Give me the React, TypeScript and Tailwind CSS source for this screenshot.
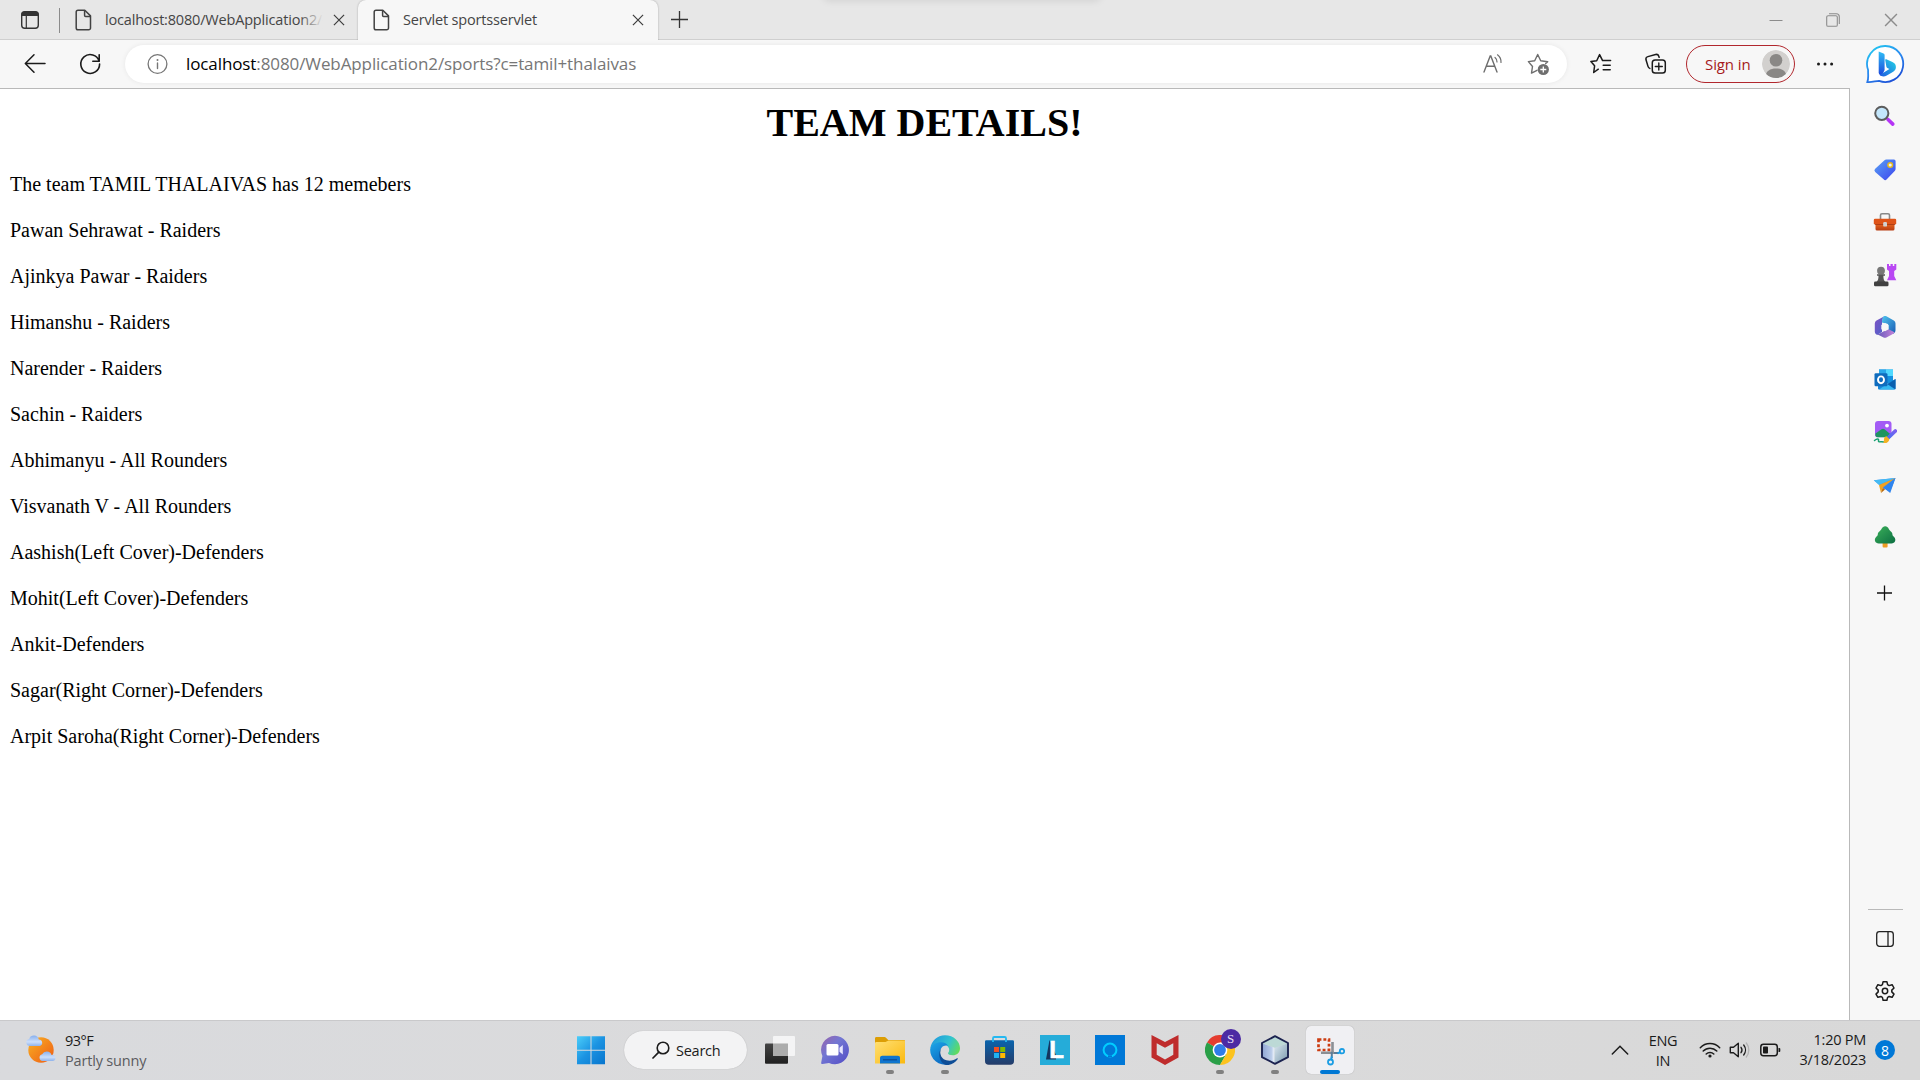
import React from "react";

const ui = "font-['Open_Sans','Noto_Sans',sans-serif]";

type IconProps = { size?: number; className?: string; children: React.ReactNode };

function Icon({ size = 24, className = "", children }: IconProps) {
  return (
    <svg width={size} height={size} viewBox={`0 0 ${size} ${size}`} fill="none" className={`block shrink-0 ${className}`}>
      {children}
    </svg>
  );
}

function DocIcon() {
  return (
    <svg width="17" height="22" viewBox="0 0 17 22" fill="none" stroke="#424242" strokeWidth="1.5" strokeLinejoin="round" className="block shrink-0">
      <path d="M3 1.2h6.8l5.7 5.7v12a1.8 1.8 0 0 1-1.8 1.8H3a1.8 1.8 0 0 1-1.8-1.8V3A1.8 1.8 0 0 1 3 1.2Z" />
      <path d="M9.6 1.4v5a1 1 0 0 0 1 1h4.8" />
    </svg>
  );
}

function CloseIcon({ size = 12, color = "#3c3c3c" }: { size?: number; color?: string }) {
  return (
    <svg width={size} height={size} viewBox="0 0 13 13" stroke={color} strokeWidth="1.3" className="block shrink-0">
      <path d="M1 1l11 11M12 1L1 12" />
    </svg>
  );
}

function TabStrip() {
  return (
    <div className="relative flex h-[40px] shrink-0 items-start overflow-hidden bg-[#e7e7e7] shadow-[inset_0_-1px_0_#cfcfcf]">
      <div className="absolute top-[-9px] left-[824px] h-[9px] w-[276px] rounded-full shadow-[0_0_8px_rgba(0,0,0,0.12)]" />
      <div className="flex h-[40px] w-[59px] items-center pl-[20px]">
        <Icon size={20}>
          <rect x="1.7" y="1.7" width="16.6" height="16.6" rx="3" stroke="#333" strokeWidth="1.4" />
          <path d="M1.5 6V4.5a3 3 0 0 1 3-3h11a3 3 0 0 1 3 3V6Z" fill="#333" />
          <path d="M6.3 6v12" stroke="#333" strokeWidth="1.2" />
        </Icon>
      </div>
      <div className="mt-[8px] h-[25px] w-px bg-[#8b8b8b]" />
      <div className="flex h-[40px] w-[298px] items-center pl-[15px]">
        <DocIcon />
        <div className={`${ui} relative ml-[13px] w-[218px] overflow-hidden text-[14.5px] tracking-[-0.18px] whitespace-nowrap text-[#454545]`}>
          localhost:8080/WebApplication2/
          <div className="absolute inset-y-0 right-0 w-[24px] bg-linear-to-r from-transparent to-[#e7e7e7]" />
        </div>
        <div className="ml-[10px]"><CloseIcon /></div>
      </div>
      <div className="flex h-[40px] w-[300px] items-center rounded-t-[8px] bg-[#f7f7f7] pl-[15px] shadow-[0_0_2px_rgba(0,0,0,0.3)] [clip-path:inset(-4px_-4px_0_-4px)]">
        <DocIcon />
        <div className={`${ui} ml-[13px] w-[229px] text-[14.5px] tracking-[-0.18px] whitespace-nowrap text-[#454545]`}>Servlet sportsservlet</div>
        <CloseIcon />
      </div>
      <div className="mt-[10px] ml-[12px]">
        <Icon size={18}><path d="M9.500 1v17M1 9.500h17" stroke="#333" strokeWidth="1.3" /></Icon>
      </div>
      <div className="ml-auto flex h-[39px] items-center pr-[22px]">
        <Icon size={14}><path d="M0.5 7.5h13" stroke="#8c8c8c" /></Icon>
        <div className="ml-[43px]">
          <Icon size={14}>
            <rect x="0.7" y="2.7" width="10.6" height="10.6" rx="1.4" stroke="#8c8c8c" strokeWidth="1.1" />
            <path d="M3 .7h7.3a3 3 0 0 1 3 3V11" stroke="#8c8c8c" strokeWidth="1.1" />
          </Icon>
        </div>
        <div className="ml-[44px]"><CloseIcon size={14} color="#8c8c8c" /></div>
      </div>
    </div>
  );
}

function Toolbar() {
  return (
    <div className="flex h-[48px] shrink-0 items-center bg-[#f7f7f7] pl-[24px]">
      <Icon size={22}><path d="M21 10.5H1.8M10 1.8L1.3 10.5l8.7 8.7" stroke="#1b1b1b" strokeWidth="1.5" strokeLinecap="round" strokeLinejoin="round" /></Icon>
      <Icon size={24} className="ml-[32px]">
        <path d="M21.2 9.3A9.4 9.4 0 1 0 21.6 12M21.2 2.8v6.5h-6.4" stroke="#1b1b1b" strokeWidth="1.6" strokeLinecap="round" strokeLinejoin="round" />
      </Icon>
      <div className="ml-[23px] flex h-[38px] w-[1442px] items-center rounded-full bg-white pl-[22px] shadow-[0_0_5px_rgba(0,0,0,0.07)]">
        <Icon size={22}>
          <circle cx="10.5" cy="11" r="9.4" stroke="#767676" strokeWidth="1.3" />
          <path d="M10.5 10v5.5" stroke="#767676" strokeWidth="1.4" strokeLinecap="round" />
          <circle cx="10.5" cy="7" r="1" fill="#767676" />
        </Icon>
        <div className={`${ui} ml-[17px] text-[17px] tracking-[-0.1px] whitespace-nowrap text-[#767676]`}>
          <span className="text-black">localhost</span>:8080/WebApplication2/sports?c=tamil+thalaivas
        </div>
        <Icon size={22} className="ml-auto">
          <path d="M2 19L8.2 3h.6L15 19M4.3 13.3h8.4" stroke="#6e6e6e" strokeWidth="1.4" strokeLinecap="round" />
          <path d="M13 4.5a5.5 5.5 0 0 1 2 4.5M15.500 1.800A9 9 0 0 1 19 9.500" stroke="#6e6e6e" strokeWidth="1.2" strokeLinecap="round" />
        </Icon>
        <Icon size={24} className="mr-[16px] ml-[23px]">
          <path d="M10 18.3l-5.5 2.8 1-6.6L1.4 9.6l6.3-.9 3-6.200 3 6.200 7 1-2 1.800" stroke="#6e6e6e" strokeWidth="1.4" strokeLinejoin="round" strokeLinecap="round" />
          <circle cx="16.3" cy="17.500" r="5.600" fill="#6e6e6e" />
          <path d="M16.300 14.500v6M13.300 17.500h6" stroke="white" strokeWidth="1.300" />
        </Icon>
      </div>
      <Icon size={22} className="ml-[23px]">
        <path d="M8.300 16.200l-4.600 3.300.9-6.700L.9 8.600l5.800-.9L9.600 1.600l3 6h8M6.900 17.200" stroke="#1b1b1b" strokeWidth="1.500" strokeLinejoin="round" strokeLinecap="round" />
        <path d="M13.200 12.200h7M13.200 16.800h7" stroke="#1b1b1b" strokeWidth="1.500" strokeLinecap="round" />
      </Icon>
      <Icon size={22} className="ml-[33px]">
        <rect x="7.300" y="7" width="13" height="13" rx="2.800" stroke="#1b1b1b" strokeWidth="1.500" />
        <path d="M13.800 10v7M10.300 13.500h7" stroke="#1b1b1b" strokeWidth="1.400" strokeLinecap="round" />
        <path d="M4.800 15.400a3 3 0 0 1-1.800-2L1 6.800a2.700 2.700 0 0 1 1.900-3.200l7.700-2.100a2.700 2.700 0 0 1 3.200 1.800l.3 1" stroke="#1b1b1b" strokeWidth="1.500" strokeLinecap="round" />
      </Icon>
      <div className={`${ui} ml-[19px] flex h-[38px] w-[109px] items-center rounded-full border border-[#b1272d] pl-[18px] text-[15px] text-[#a51a20]`}>
        <span className="w-[57px] tracking-[-0.100px] whitespace-nowrap">Sign in</span>
        <Icon size={28}>
          <clipPath id="avatar"><circle cx="14" cy="14" r="14" /></clipPath>
          <g clipPath="url(#avatar)">
            <circle cx="14" cy="14" r="14" fill="#d2d0ce" />
            <circle cx="14" cy="10.300" r="6.300" fill="#8a8886" />
            <path d="M3.800 26c0-5 4.500-7.500 10.200-7.500S24.200 21 24.200 26v3H3.800Z" fill="#8a8886" />
          </g>
        </Icon>
      </div>
      <Icon size={18} className="ml-[21px]">
        <circle cx="2.500" cy="9" r="1.500" fill="#1b1b1b" /><circle cx="9" cy="9" r="1.500" fill="#1b1b1b" /><circle cx="15.600" cy="9" r="1.500" fill="#1b1b1b" />
      </Icon>
      <Icon size={40} className="ml-[31px]">
        <defs>
          <linearGradient id="bingRing" x1="8" y1="2" x2="30" y2="38" gradientUnits="userSpaceOnUse"><stop stopColor="#22c7f0" /><stop offset=".5" stopColor="#2b8af0" /><stop offset="1" stopColor="#1b4bd4" /></linearGradient>
          <linearGradient id="bingStem" x1="0" y1="0" x2="0" y2="1"><stop stopColor="#30bdf5" /><stop offset="1" stopColor="#1b48dc" /></linearGradient>
          <linearGradient id="bingBowl" x1="1" y1="0" x2="0" y2="1"><stop stopColor="#25d5e6" /><stop offset="1" stopColor="#1e5ae0" /></linearGradient>
        </defs>
        <path d="M20.500 2A18 18 0 1 1 14 36.900C10.500 37 6.500 38.500 2.300 38c1.600-3.800.6-7.500.8-12A18 18 0 0 1 20.500 2Z" fill="white" stroke="url(#bingRing)" strokeWidth="1.800" />
        <path d="M13.700 7.600l4.800 1.900c.7.300 1.100.7 1.100 1.400V26l-2.600 5.200c-2 .3-3.300-.9-3.300-2.700Z" fill="url(#bingStem)" />
        <path d="M20.800 15l6.600 3c2.500 1.200 3.500 2.700 3.500 5 0 2.100-.9 3.600-2.700 4.700l-6.400 3.900c-2.500 1.400-5.300 1.300-7.100-.5l9.700-6-2-1.200c-.5-.3-.8-.6-1-1.200L20.200 16Z" fill="url(#bingBowl)" />
      </Icon>
    </div>
  );
}

const lines = [
  "The team TAMIL THALAIVAS has 12 memebers",
  "Pawan Sehrawat - Raiders",
  "Ajinkya Pawar - Raiders",
  "Himanshu - Raiders",
  "Narender - Raiders",
  "Sachin - Raiders",
  "Abhimanyu - All Rounders",
  "Visvanath V - All Rounders",
  "Aashish(Left Cover)-Defenders",
  "Mohit(Left Cover)-Defenders",
  "Ankit-Defenders",
  "Sagar(Right Corner)-Defenders",
  "Arpit Saroha(Right Corner)-Defenders",
];

function PageContent() {
  return (
    <main className="flex-1 border-t border-[#b9b9b9] bg-white px-[10px] font-['Liberation_Serif',serif] text-black">
      <h1 className="mt-[11px] text-center text-[40px] leading-[46px] font-bold">TEAM DETAILS!</h1>
      <div className="mt-[15px] text-[20px] leading-[46px]">
        {lines.map((line) => <p key={line}>{line}</p>)}
      </div>
    </main>
  );
}

function Sidebar() {
  return (
    <aside className="flex w-[71px] shrink-0 flex-col items-center border-l border-[#b9b9b9] bg-[#f7f7f7] pt-[17px]">
      <div className="flex flex-col gap-[28.500px] pr-px">
        <Icon>
          <path d="M15 14.500l4.800 4.600" stroke="#b535f5" strokeWidth="3.600" strokeLinecap="round" />
          <circle cx="8.800" cy="8.300" r="6.600" fill="#c3e6fb" stroke="#5c5c5c" strokeWidth="2" />
        </Icon>
        <Icon>
          <defs><linearGradient id="tag" x1="0" y1="0" x2="1" y2="1"><stop stopColor="#5aa2f5" /><stop offset="1" stopColor="#3d44ee" /></linearGradient></defs>
          <path d="M13.500 1.600h7.500a1.600 1.600 0 0 1 1.600 1.600v7.500a3 3 0 0 1-.9 2.200l-7.900 8.400a2.200 2.200 0 0 1-3.200 0L2.200 14a2.200 2.200 0 0 1 0-3.200l9-8.300a3 3 0 0 1 2.300-.9Z" fill="url(#tag)" />
          <circle cx="17.200" cy="7" r="2.300" fill="#e9f1ff" stroke="#e8b91c" strokeWidth="1.500" />
        </Icon>
        <Icon>
          <defs><linearGradient id="case" x1="0" y1="0" x2="0" y2="1"><stop stopColor="#ee6a22" /><stop offset="1" stopColor="#b83d12" /></linearGradient></defs>
          <path d="M7.500 9V5.200c0-1 .6-1.500 1.500-1.500h6c.9 0 1.500.5 1.500 1.500V9" stroke="#888" strokeWidth="1.600" />
          <path d="M2.500 13h19v6a1.500 1.500 0 0 1-1.500 1.500H4A1.500 1.500 0 0 1 2.500 19Z" fill="url(#case)" />
          <rect x=".8" y="8.800" width="22.400" height="5.700" rx="1.300" fill="#df5419" />
          <path d="M2 14.500h20" stroke="#9e3411" strokeWidth=".7" />
          <rect x="10.200" y="12" width="3.800" height="4.600" rx="1.200" fill="#d2d2d2" />
        </Icon>
        <Icon>
          <g fill="#b948f3"><path d="M14 1h2v2h1.500V1h2.300v2h1.500V1H23.300v5.500L21.200 8v5l2.100 4.300H14L16 13V8l-2-1.500Z" /></g>
          <circle cx="8" cy="7.700" r="3.900" fill="#777" />
          <path d="M4 11.200h8v1.600h-1.600c0 3 .4 4.800 2 6.200h-9c1.700-1.400 2.100-3.200 2.100-6.200H4Z" fill="#555" />
          <rect x="1" y="18.600" width="14.500" height="4.600" rx="1.300" fill="#414141" />
        </Icon>
        <Icon>
          <defs>
            <linearGradient id="m1" x1="0" y1="0" x2="1" y2="1"><stop stopColor="#8052c3" /><stop offset="1" stopColor="#4b63cb" /></linearGradient>
            <linearGradient id="m2" x1="0" y1="0" x2="1" y2="1"><stop stopColor="#4fc4ee" /><stop offset="1" stopColor="#1a5cb4" /></linearGradient>
            <linearGradient id="m3" x1="0" y1="0" x2="1" y2="0"><stop stopColor="#5c55b8" /><stop offset="1" stopColor="#c583d9" /></linearGradient>
          </defs>
          <path d="M11 1.500L3.500 5.500a3.500 3.500 0 0 0-1.700 3v8c0 2 1.200 3 2.500 3.200L9 17V7.500c0-2.400 1-4.500 2-6Z" fill="url(#m1)" />
          <path d="M10.500 1.400c1-.5 2.200-.5 3.300 0l7 4a3.500 3.500 0 0 1 1.700 3.100V15c0 1.800-.8 3-2 3.700L15 15.500V9L9 7.500c0-3 .6-5 1.500-6.100Z" fill="url(#m2)" />
          <path d="M2.700 18.500c1.500 1 3.200.5 5-.6L15 14l6.500 3.300a4 4 0 0 1-1.200 1.400l-6.400 3.600a4 4 0 0 1-3.800 0Z" fill="url(#m3)" />
          <path d="M12 7.900l3.700 2.100v4.200L12 16.300l-3.700-2.100V10Z" fill="#f7f7f7" />
        </Icon>
        <Icon>
          <path d="M6 1.500h14v14H6Z" fill="#1490df" />
          <path d="M13 1.500h7V8h-7Z" fill="#50d9ff" /><path d="M6 1.500h7V8H6Z" fill="#28a8ea" />
          <path d="M5 11l9 5 8.500-5v9.500a1 1 0 0 1-1 1H6a1 1 0 0 1-1-1Z" fill="#1784d8" />
          <path d="M22.500 11l-8 5.200 8 5Z" fill="#0a5fae" /><path d="M6 21.500l8-5.500 8 5.500Z" fill="#35b8f1" />
          <rect x="1.500" y="5.300" width="13" height="13" rx="1.200" fill="#0f6cbd" />
          <ellipse cx="8" cy="11.800" rx="3" ry="3.400" stroke="white" strokeWidth="1.900" />
        </Icon>
        <Icon>
          <defs><linearGradient id="brush" x1="1" y1="0" x2="0" y2="1"><stop stopColor="#7a60f0" /><stop offset="1" stopColor="#4b6ff0" /></linearGradient></defs>
          <rect x="2" y="1" width="16.500" height="16.500" rx="3" fill="#a35cf5" />
          <path d="M2.500 13.500l6-4.300c1-.7 2-.7 3 0l6 5-2 3.300H5a3 3 0 0 1-2.500-2Z" fill="#1f9560" />
          <circle cx="14" cy="5.600" r="1.900" fill="#fff" />
          <path d="M.5 17.500h12.500v5H.5Z" fill="#f7f7f7" />
          <path d="M1.500 20.500c2.500-2 4.500-2 4 .2s3 .5 5 1.300" stroke="#16a070" strokeWidth="1.500" strokeLinecap="round" />
          <path d="M22.300 11L15.500 17.500" stroke="url(#brush)" strokeWidth="3.800" strokeLinecap="round" />
          <path d="M13.500 16.300l2.800 2.600c0 3-3 4.800-6.300 4 1.500-1 .6-2.200 1-4 .3-1.500 1.300-2.300 2.500-2.600Z" fill="#f4b223" />
        </Icon>
        <Icon>
          <path d="M.8 7.200L22.500 5 17 18.500l-6-3Z" fill="#3c8df5" />
          <path d="M.8 7.200L22.500 5 6 12Z" fill="#45baf3" />
          <path d="M6 12L22.500 5 9.800 14.500 8 20Z" fill="#f2a21f" /><path d="M9.800 14.500L8 20l4-3.500Z" fill="#b56a12" />
          <path d="M22.500 5L10.500 14.700l6.700 5.300Z" fill="#2f84ee" />
        </Icon>
        <Icon>
          <defs><linearGradient id="tree" x1="0" y1="0" x2="1" y2="1"><stop stopColor="#3bb15a" /><stop offset="1" stopColor="#0d6e42" /></linearGradient></defs>
          <rect x="9.600" y="16" width="5" height="6.500" rx="1" fill="#ee9d25" />
          <path d="M9.800 2.300a3.500 3.500 0 0 1 4.800 0c1 1 1.600 2.700 3 4 1.300 1.200 1.800 2 1.800 3 0 1.200.6 1.600 1.700 2.800 2.600 2.900.8 6.400-2.600 6.400H5.700c-3.400 0-5.200-3.500-2.600-6.400 1.100-1.200 1.700-1.600 1.700-2.800 0-1 .5-1.800 1.800-3 1.500-1.300 2.100-3 3.200-4Z" fill="url(#tree)" />
        </Icon>
      </div>
      <Icon size={16} className="mt-[36px]"><path d="M7.500 .5v15M0 8h15" stroke="#111" strokeWidth="1.300" /></Icon>
      <div className="mt-auto h-px w-[35px] bg-[#b9b9b9]" />
      <Icon size={20} className="mt-[19px]">
        <rect x="1.700" y="2.700" width="16.600" height="14.600" rx="2.700" stroke="#222" strokeWidth="1.300" /><path d="M13 2.700v14.600" stroke="#222" strokeWidth="1.300" />
      </Icon>
      <Icon size={24} className="mt-[30px] mb-[17px]">
        <path d="M10.100 2.200h3.800l.7 3 1.500.9 3-.9 1.900 3.300-2.200 2.100v1.800l2.200 2.200-1.900 3.200-3-.8-1.500.8-.7 3h-3.800l-.7-3-1.500-.8-3 .8L3 14.600l2.200-2.200v-1.800L3 8.500l1.900-3.300 3 .9 1.500-.9Z" transform="translate(0 .5)" stroke="#1b1b1b" strokeWidth="1.500" strokeLinejoin="round" />
        <circle cx="12" cy="12" r="2.700" stroke="#1b1b1b" strokeWidth="1.500" />
      </Icon>
    </aside>
  );
}

function AppSlot({ running = false, children }: { running?: boolean; children: React.ReactNode }) {
  return (
    <div className="flex h-[60px] w-[55px] shrink-0 flex-col items-center pt-[15px]">
      {children}
      {running && <div className="mt-[5px] h-[4px] w-[8px] rounded-full bg-[#808080]" />}
    </div>
  );
}

function Taskbar() {
  return (
    <footer className={`${ui} flex h-[60px] shrink-0 items-center bg-linear-to-r from-[#d9dadd] via-[#dbdbdc] to-[#d8d8d8] text-[#1b1b1b] shadow-[inset_0_1px_0_#c9c9cb]`}>
      <Icon size={32} className="ml-[25px]">
        <defs>
          <linearGradient id="sun" x1="0" y1="0" x2="1" y2="1"><stop stopColor="#f9b224" /><stop offset="1" stopColor="#ee5b14" /></linearGradient>
          <linearGradient id="cloud" x1="0" y1="0" x2="0" y2="1"><stop stopColor="#88b0ee" /><stop offset=".6" stopColor="#ccdffb" /><stop offset="1" stopColor="#8fb3ec" /></linearGradient>
        </defs>
        <circle cx="16" cy="16" r="12.700" fill="url(#sun)" />
        <path d="M4.500 12a3.600 3.600 0 0 1-.3-7.100 5 5 0 0 1 9.600.7 3.300 3.300 0 0 1 1.200 6.400Z" fill="url(#cloud)" />
        <path d="M17.500 27a3.400 3.400 0 0 1-.3-6.700 5 5 0 0 1 9.300.7A3 3 0 0 1 28 27Z" fill="url(#cloud)" />
      </Icon>
      <div className="ml-[8px] w-[508px] pt-[2px] text-[14.500px] leading-[20px] whitespace-nowrap">
        <div className="tracking-[-0.500px]">93°F</div>
        <div className="tracking-[-0.180px] text-[#5b5b5f]">Partly sunny</div>
      </div>
      <Icon size={30} className="ml-[3px]">
        <defs><linearGradient id="win" x1="0" y1="0" x2="30" y2="30" gradientUnits="userSpaceOnUse"><stop stopColor="#4fd2fb" /><stop offset=".5" stopColor="#1b93e2" /><stop offset="1" stopColor="#0673cc" /></linearGradient></defs>
        <path d="M1 1.300h13.500v13.500H1ZM15.500 1.300H29v13.500H15.500ZM1 15.800h13.500V29.300H1ZM15.500 15.800H29V29.300H15.500Z" fill="url(#win)" />
      </Icon>
      <div className="ml-[18px] flex h-[38px] w-[123px] items-center rounded-full bg-[#f3f3f4] pl-[28px] shadow-[0_0_1px_rgba(0,0,0,0.250)]">
        <Icon size={18}><circle cx="11" cy="7" r="5.800" stroke="#1b1b1b" strokeWidth="1.600" /><path d="M6.800 11.200L1 17" stroke="#1b1b1b" strokeWidth="1.700" strokeLinecap="round" /></Icon>
        <span className="ml-[6px] pt-px text-[14.500px] tracking-[-0.250px]">Search</span>
      </div>
      <div className="ml-[5px] flex">
        <AppSlot>
          <Icon size={30}>
            <defs><linearGradient id="tv" x1="0" y1="0" x2="0" y2="1"><stop stopColor="#444" /><stop offset="1" stopColor="#202020" /></linearGradient></defs>
            <rect x="0" y="8.500" width="23" height="20.300" rx="1" fill="url(#tv)" />
            <rect x="8" y="1" width="22" height="20" rx="1" fill="#f6f6f6" fillOpacity=".95" /><rect x="8" y="8.500" width="15" height="12.500" fill="#acacac" />
          </Icon>
        </AppSlot>
        <AppSlot>
          <Icon size={30}>
            <defs><linearGradient id="chat" x1="0" y1="0" x2="1" y2="1"><stop stopColor="#9a62a9" /><stop offset=".4" stopColor="#7377d3" /><stop offset="1" stopColor="#514bc5" /></linearGradient></defs>
            <path d="M15 .8A14.200 14.200 0 1 1 9 28l-6.500 1c-1 .1-1.500-.5-1.300-1.400L2.400 21A14.200 14.200 0 0 1 15 .8Z" fill="url(#chat)" />
            <rect x="6.500" y="9" width="12" height="11.500" rx="1.500" fill="#fff" /><path d="M19.500 12.800l3.300-2.800v9.500l-3.300-2.700Z" fill="#e7e6ff" />
          </Icon>
        </AppSlot>
        <AppSlot running>
          <Icon size={30}>
            <defs><linearGradient id="folder" x1="0" y1="0" x2="1" y2="1"><stop stopColor="#ffe075" /><stop offset="1" stopColor="#fbb90f" /></linearGradient></defs>
            <path d="M0 3.500C0 2.500.5 2 1.500 2H9c1 0 1.500.3 2.200 1l2 2H29c.7 0 1 .4 1 1v4H0Z" fill="#dc9e05" />
            <path d="M0 8.500c0-1 .5-1.500 1.500-1.500h9l3-1.500H30V28.400H0Z" fill="url(#folder)" />
            <path d="M5 28.400V23c0-1.600 1-2.300 2.300-2.300h15.400c1.500 0 2.300.7 2.300 2.300v5.400Z" fill="#0f75cf" /><path d="M8 24.800h14" stroke="#0a4a93" strokeWidth="1.200" />
          </Icon>
        </AppSlot>
        <AppSlot running>
          <Icon size={30}>
            <defs>
              <linearGradient id="eg" x1="4" y1="4" x2="30" y2="18" gradientUnits="userSpaceOnUse"><stop stopColor="#239fdc" /><stop offset=".5" stopColor="#31c3cf" /><stop offset="1" stopColor="#6be047" /></linearGradient>
              <linearGradient id="eb" x1="2" y1="10" x2="16" y2="30" gradientUnits="userSpaceOnUse"><stop stopColor="#1a9fe3" /><stop offset="1" stopColor="#0b62bd" /></linearGradient>
            </defs>
            <path d="M.3 13.500C1.300 5.800 7.300.2 15 .2c8.800 0 15 6.200 15 13 0 4.400-3.300 7-7.200 7-3 0-4.800-1-4.800-2 0-.8 1.200-1.400 1.200-3.400 0-3-3-5.800-7.500-5.800-5 0-8.600 2-11.400 4.500Z" fill="url(#eg)" />
            <path d="M.2 14C1.500 9.800 6 7.300 11 7.300c3.500 0 6 1.500 7.300 3.700-4.300-1.500-8.300 1.500-8.300 6.500 0 5 3.700 9.400 8.800 11.700A14.800 14.800 0 0 1 .2 14Z" fill="url(#eb)" />
            <path d="M11.400 13.300c-2.700 4.500-.5 10.500 5 12 4 1 7.800 0 10.600-2 .6-.4 1.200.2.8.8C25 28.300 20.500 30.500 16 30 9.500 28 7.300 18 11.400 13.300Z" fill="#0e4d96" />
            <circle cx="15" cy="15.500" r="3.700" fill="#dadadc" />
          </Icon>
        </AppSlot>
        <AppSlot>
          <Icon size={30}>
            <defs><linearGradient id="store" x1="0" y1="0" x2="0" y2="1"><stop stopColor="#0a64ad" /><stop offset="1" stopColor="#253c69" /></linearGradient></defs>
            <path d="M8 7V3.300c0-.8.500-1.300 1.300-1.300h10.400c.8 0 1.300.5 1.300 1.300V7" stroke="#25b8f0" strokeWidth="1.800" />
            <path d="M0 6.500a1.300 1.300 0 0 1 1.300-1.300h26.400a1.300 1.300 0 0 1 1.300 1.300V26a3.800 3.800 0 0 1-3.800 3.800H3.800A3.800 3.800 0 0 1 0 26Z" fill="url(#store)" />
            <path d="M9 12h5v5H9Z" fill="#f25022" /><path d="M15.200 12h5v5h-5Z" fill="#7fba00" /><path d="M9 18h5v5H9Z" fill="#1fb2f3" /><path d="M15.200 18h5v5h-5Z" fill="#ffb901" />
            <path d="M8 4.500v2.500M21 4.500v2.500" stroke="#25b8f0" strokeWidth="1.800" />
          </Icon>
        </AppSlot>
        <AppSlot>
          <div className="relative flex h-[30px] w-[30px] items-center justify-center bg-[#25acd9] text-[24px] leading-none font-bold text-white">
            <svg width="30" height="30" viewBox="0 0 30 30" className="absolute inset-0"><path d="M9.500 5L6 24.500h10V20Z" fill="#14365c" /></svg>
            <span className="relative ml-[4px] font-['Liberation_Sans',sans-serif] [-webkit-text-stroke:0.600px_white]">L</span>
          </div>
        </AppSlot>
        <AppSlot>
          <Icon size={30}><rect width="30" height="30" fill="#0078d7" /><circle cx="15" cy="15" r="6.400" stroke="#00cdff" strokeWidth="2" /><path d="M13 21.300h4" stroke="#0078d7" strokeWidth="1.800" /></Icon>
        </AppSlot>
        <AppSlot>
          <Icon size={30}><path d="M1.500 0L15 7 28.500 0V22.500L15 30 1.500 22.500Z" fill="#bf2c2c" /><path d="M6.700 8.300L15 12.800l8.300-4.500v11.500L15 24.500l-8.300-4.700Z" fill="#dadbdc" /></Icon>
        </AppSlot>
        <AppSlot running>
          <div className="relative">
            <Icon size={30}>
              <path d="M15 15L2 7.500A15 15 0 0 1 28 7.500H15Z" fill="#e53d30" /><path d="M15 15L2 7.500A15 15 0 0 0 15 30l6.500-11.200Z" fill="#2a9f48" /><path d="M15 7.500h13A15 15 0 0 1 15 30l6.500-11.200Z" fill="#fcc31e" />
              <circle cx="15" cy="15" r="7.400" fill="#fff" /><circle cx="15" cy="15" r="5.900" fill="#2f7de9" />
            </Icon>
            <div className="absolute top-[-6px] left-[16px] flex h-[20px] w-[20px] items-center justify-center rounded-full bg-[#4c2aa3] font-['Liberation_Serif',serif] text-[13px] text-[#e4dcf6]">S</div>
          </div>
        </AppSlot>
        <AppSlot running>
          <Icon size={30}>
            <defs>
              <linearGradient id="nb1" x1="0" y1="0" x2="1" y2="0"><stop stopColor="#8fa5d3" /><stop offset=".75" stopColor="#b9cbe9" /><stop offset="1" stopColor="#f2f7fd" /></linearGradient>
              <linearGradient id="nb2" x1="0" y1="0" x2="1" y2="1"><stop stopColor="#dbe8f0" /><stop offset="1" stopColor="#7897ac" /></linearGradient>
            </defs>
            <path d="M2 8.200L14.500 12.500V28.600L2 22Z" fill="url(#nb1)" /><path d="M28 8.200L14.500 12.500V28.600L28 22Z" fill="url(#nb2)" /><path d="M2 8.200L15 1.500l13 6.700-13 4.500Z" fill="#bcd9d6" />
            <path d="M15 1.200L28 8v14.200L15 28.800 2 22.200V8Z" stroke="#1c2350" strokeWidth="1.900" strokeLinejoin="round" />
          </Icon>
        </AppSlot>
        <div className="mt-[6px] ml-[4px] flex h-[48px] w-[48px] flex-col items-center rounded-[5px] bg-[#f0f0f3] pt-[10px] shadow-[0_0_1px_rgba(0,0,0,0.300)]">
          <Icon size={30}>
            <rect x="3.500" y="3.500" width="10.500" height="10.500" stroke="#cc3c12" strokeWidth="2.700" strokeDasharray="2.900 2" />
            <path d="M17.500 6v12M6 16.700h13" stroke="#8b8f94" strokeWidth="2.600" /><path d="M16.800 16v6M19 17h4" stroke="#5b7d99" strokeWidth="2" />
            <path d="M16.200 23.500l.6-3M22.500 17.200l3-1" stroke="#1b9de3" strokeWidth="2" /><circle cx="15.500" cy="26" r="2.500" stroke="#1b9de3" strokeWidth="1.800" /><circle cx="27" cy="15.200" r="2.200" stroke="#1b9de3" strokeWidth="1.800" />
          </Icon>
          <div className="mt-[4px] h-[4px] w-[20px] rounded-full bg-[#0078d4]" />
        </div>
      </div>
      <Icon size={18} className="ml-[257px]"><path d="M1.300 13L9 5.300l7.700 7.700" stroke="#1b1b1b" strokeWidth="1.500" strokeLinecap="round" /></Icon>
      <div className="ml-[19px] w-[30px] pt-[2px] text-center text-[14.500px] leading-[20px] tracking-[-0.300px]"><div>ENG</div><div>IN</div></div>
      <Icon size={22} className="ml-[21px]">
        <path d="M1.300 8.700a13.500 13.500 0 0 1 19.400 0M4.200 12a9.500 9.500 0 0 1 13.600 0M7.200 15a5.500 5.500 0 0 1 7.600 0" stroke="#1b1b1b" strokeWidth="1.500" strokeLinecap="round" /><circle cx="11" cy="17" r="1.600" fill="#1b1b1b" />
      </Icon>
      <Icon size={22} className="ml-[8px]">
        <path d="M1.300 8.300h3.200l4.800-4v13.400l-4.800-4H1.300Z" stroke="#1b1b1b" strokeWidth="1.400" strokeLinejoin="round" />
        <path d="M12 8.300a4.500 4.500 0 0 1 0 5.400M14.700 6a8 8 0 0 1 0 10" stroke="#1b1b1b" strokeWidth="1.300" strokeLinecap="round" /><path d="M17.300 4a11 11 0 0 1 0 14" stroke="#b3b3b3" strokeWidth="1.300" strokeLinecap="round" />
      </Icon>
      <Icon size={22} className="ml-[9px]">
        <rect x=".8" y="5.300" width="16.500" height="11.400" rx="2.600" stroke="#1b1b1b" strokeWidth="1.500" /><rect x="3" y="7.500" width="5" height="7" rx=".8" fill="#1b1b1b" /><path d="M18.500 9h.8a1 1 0 0 1 1 1v2a1 1 0 0 1-1 1h-.8Z" fill="#1b1b1b" />
      </Icon>
      <div className="ml-auto text-right text-[14.500px] leading-[20px] tracking-[-0.250px] whitespace-nowrap"><div>1:20 PM</div><div>3/18/2023</div></div>
      <div className="mr-[25px] ml-[9px] flex h-[20px] w-[20px] items-center justify-center rounded-full bg-[#0078d7] text-[14px] text-white">8</div>
    </footer>
  );
}

export default function App() {
  return (
    <div className="flex h-[1080px] w-[1920px] flex-col overflow-hidden bg-[#f7f7f7]">
      <TabStrip />
      <Toolbar />
      <div className="flex min-h-0 flex-1">
        <PageContent />
        <Sidebar />
      </div>
      <Taskbar />
    </div>
  );
}
